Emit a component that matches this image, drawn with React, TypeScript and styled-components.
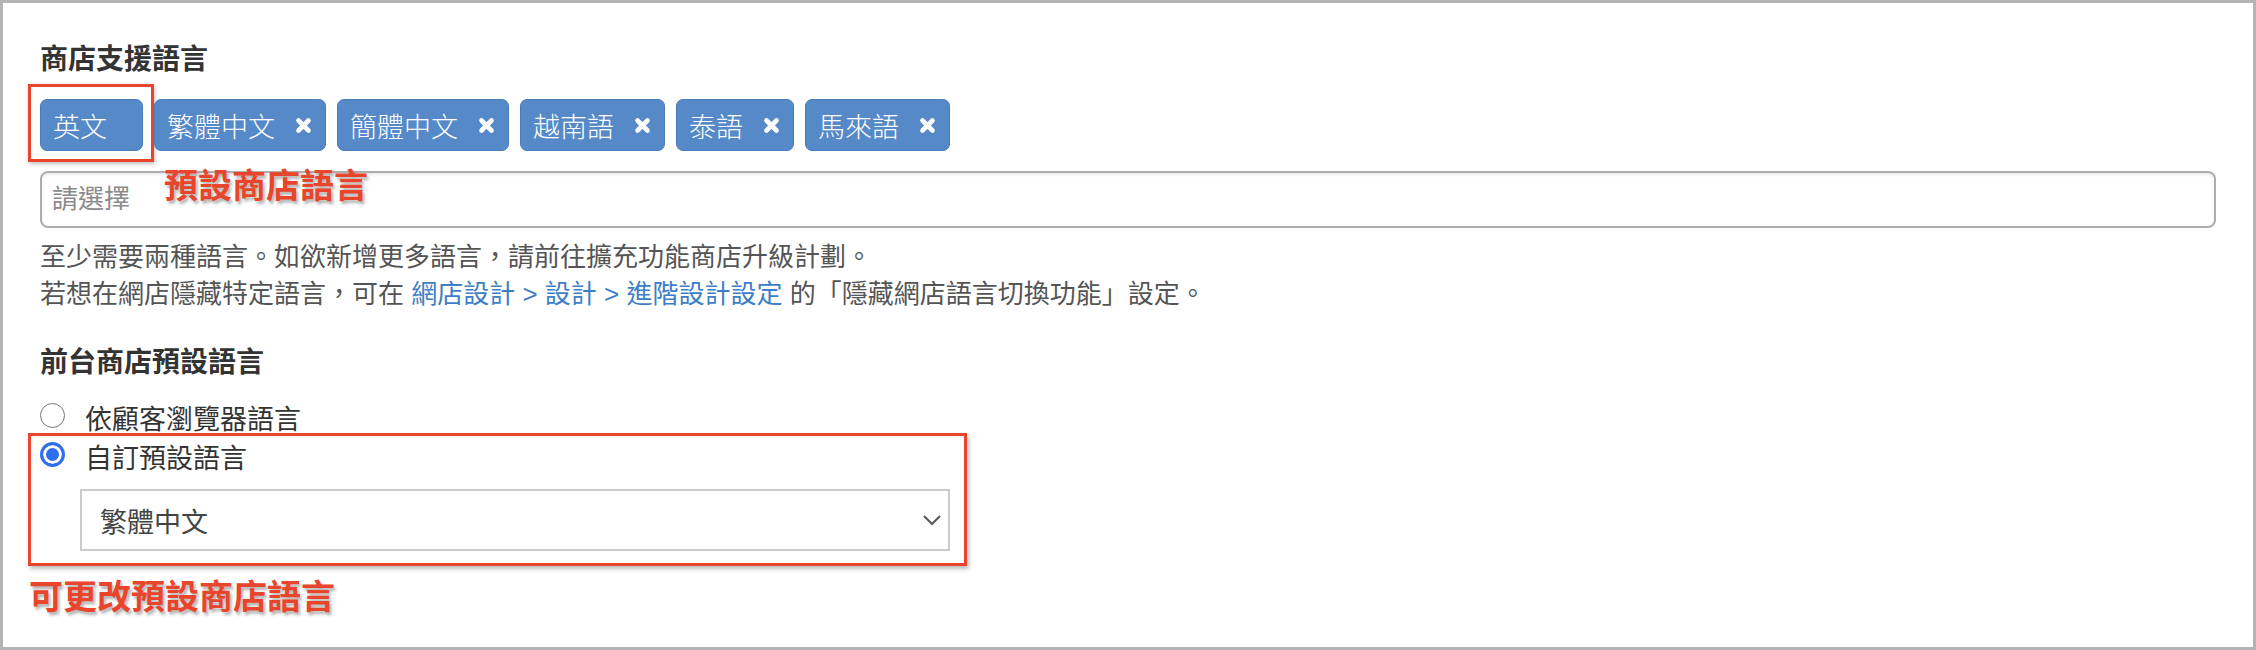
import React from 'react';
import styled, {createGlobalStyle} from 'styled-components';

const GlobalStyle = createGlobalStyle`
  html, body {
    margin: 0;
    padding: 0;
    background: #fff;
  }
  body {
    font-family: "Liberation Sans", "Noto Sans CJK TC", sans-serif;
  }
`;

const languages = [
    {name: '英文', isDefault: true},
    {name: '繁體中文'},
    {name: '簡體中文'},
    {name: '越南語'},
    {name: '泰語'},
    {name: '馬來語'},
];

const RemoveIcon = () => (
    <svg width="17" height="17" viewBox="0 0 17 17">
        <path d="M3.5 3.5 L13.5 13.5 M13.5 3.5 L3.5 13.5" stroke="#fff" strokeWidth="4.6" strokeLinecap="round"/>
    </svg>
);

const Chevron = () => (
    <svg width="18" height="10" viewBox="0 0 18 10">
        <path d="M1 1 L9 9 L17 1" fill="none" stroke="#555" strokeWidth="2"/>
    </svg>
);

const App = () => {
    return (
        <>
            <GlobalStyle/>
            <Frame>
                <SectionTitle>商店支援語言</SectionTitle>
                <TagRow>
                    {languages.map(lang => (
                        <Tag key={lang.name} $isDefault={lang.isDefault}>
                            {lang.name}
                            {lang.isDefault ? <DefaultMark/> : <RemoveIcon/>}
                        </Tag>
                    ))}
                </TagRow>
                <InputWrap>
                    <SearchInput placeholder="請選擇"/>
                    <Note $overlay>預設商店語言</Note>
                </InputWrap>
                <Help>
                    <div>至少需要兩種語言。如欲新增更多語言，請前往擴充功能商店升級計劃。</div>
                    <div>
                        若想在網店隱藏特定語言，可在 <Link>網店設計 &gt; 設計 &gt; 進階設計設定</Link> 的「隱藏網店語言切換功能」設定。
                    </div>
                </Help>

                <SectionTitle $spaced>前台商店預設語言</SectionTitle>
                <RadioRow $first>
                    <Radio/>
                    <RadioLabel>依顧客瀏覽器語言</RadioLabel>
                </RadioRow>
                <Highlight>
                    <RadioRow>
                        <Radio $checked/>
                        <RadioLabel>自訂預設語言</RadioLabel>
                    </RadioRow>
                    <SelectBox>
                        <span>繁體中文</span>
                        <Chevron/>
                    </SelectBox>
                </Highlight>
                <Note>可更改預設商店語言</Note>
            </Frame>
        </>
    )
}

const Frame = styled.div`
  box-sizing: border-box;
  height: 650px;
  border: 3px solid #b3b3b3;
  padding: 37px 37px 0;
  background: #fff;
  color: #333;
`;

const SectionTitle = styled.h2<{ $spaced?: boolean }>`
  margin: ${p => p.$spaced ? '30px' : '0'} 0 0;
  font-size: 28px;
  line-height: 40px;
  font-weight: 700;
  color: #333;
`;

const TagRow = styled.div`
  display: flex;
  gap: 11px;
  margin-top: 19px;
`;

const Tag = styled.div<{ $isDefault?: boolean }>`
  position: relative;
  display: inline-flex;
  align-items: center;
  gap: 20px;
  box-sizing: border-box;
  height: 52px;
  padding: 0 ${p => p.$isDefault ? '35px' : '13px'} 0 12px;
  background: #5589c7;
  border: 1px solid #4b7dbc;
  border-radius: 7px;
  color: #fff;
  font-size: 27px;
  font-weight: 300;
`;

const DefaultMark = styled.span`
  position: absolute;
  top: -16px;
  left: -13px;
  right: -12px;
  bottom: -12px;
  border: 3px solid #e8452c;
  box-shadow: 1px 2px 4px rgba(0, 0, 0, 0.25);
  pointer-events: none;
`;

const InputWrap = styled.div`
  position: relative;
  margin-top: 20px;
`;

const SearchInput = styled.input`
  display: block;
  box-sizing: border-box;
  width: 100%;
  height: 57px;
  padding: 0 10px;
  border: 2px solid #adadad;
  border-radius: 8px;
  box-shadow: inset 0 2px 3px rgba(0, 0, 0, 0.08);
  font-family: inherit;
  font-size: 26px;
  color: #333;
  outline: none;

  &::placeholder {
    color: #8a8a8a;
  }
`;

const Note = styled.div<{ $overlay?: boolean }>`
  ${p => p.$overlay ? `
    position: absolute;
    top: -2px;
    left: 124px;
  ` : `
    margin: 14px 0 0 -11px;
  `}
  font-size: 34px;
  line-height: 1;
  font-weight: 700;
  color: #e8452c;
  text-shadow: 2px 3px 3px rgba(0, 0, 0, 0.3);
`;

const Help = styled.div`
  margin-top: 11px;
  font-size: 26px;
  line-height: 37px;
  color: #555;
`;

const Link = styled.a`
  color: #3d7ec6;
  text-decoration: none;
`;

const RadioRow = styled.div<{ $first?: boolean }>`
  display: flex;
  align-items: center;
  gap: 20px;
  height: 36px;
  margin-top: ${p => p.$first ? '14px' : '0'};
`;

const Radio = styled.span<{ $checked?: boolean }>`
  flex: none;
  box-sizing: border-box;
  width: 25px;
  height: 25px;
  border-radius: 50%;
  border: ${p => p.$checked ? '3px solid #2e6ff0' : '1.5px solid #777'};
  background: ${p => p.$checked ? '#2e6ff0' : '#fff'};
  box-shadow: ${p => p.$checked ? 'inset 0 0 0 3px #fff' : 'none'};
`;

const RadioLabel = styled.span`
  margin-top: 5px;
  font-size: 27px;
  color: #333;
`;

const Highlight = styled.div`
  box-sizing: border-box;
  width: 939px;
  margin-left: -12px;
  padding: 0 14px 12px 9px;
  border: 3px solid #e8452c;
  box-shadow: 2px 3px 4px rgba(0, 0, 0, 0.25);
`;

const SelectBox = styled.div`
  display: flex;
  align-items: center;
  justify-content: space-between;
  box-sizing: border-box;
  width: 870px;
  height: 62px;
  margin: 17px 0 0 40px;
  padding: 0 7px 0 18px;
  border: 2px solid #cbcbcb;
  font-size: 27px;
  color: #444;
`;

export default App;
